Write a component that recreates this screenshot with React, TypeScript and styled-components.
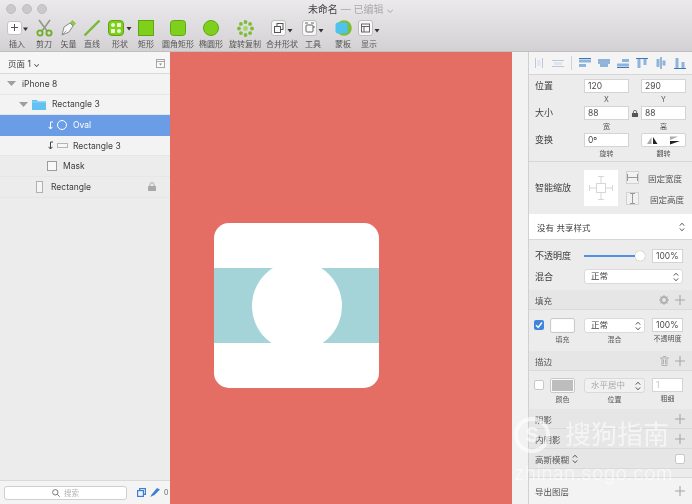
import React from "react";
import styled, {createGlobalStyle} from "styled-components";

const GlobalStyle = createGlobalStyle`
  html, body {
    margin: 0;
    padding: 0;
    background: #ececec;
  }
  body {
    font-family: "Inter", "Noto Sans CJK SC", sans-serif;
    color: #3d3d3d;
  }
`

const Updown = () => (
    <svg width="6" height="10" viewBox="0 0 6 10" fill="none" stroke="#555" strokeWidth="1"><path d="M.8 3.6 3 1.2l2.2 2.4M.8 6.4 3 8.8l2.2-2.4"/></svg>
)

const Plus = () => (
    <svg width="10" height="10" viewBox="0 0 10 10" stroke="#a6a6a6" strokeWidth="1.1"><path d="M5 0v10M0 5h10"/></svg>
)

const greenFill = "#7fd01c"
const greenEdge = "#5ea80f"

const InsertIcon = () => (
    <svg width="21" height="16" viewBox="0 0 21 16">
        <rect x=".5" y="1.5" width="14" height="13" rx="2.5" fill="#fff" stroke="#c4c4c4"/>
        <path d="M7.500 4v7M4 7.500h7" stroke="#555" strokeWidth="1"/>
        <path d="M16 7.500h5L18.500 11z" fill="#333"/>
    </svg>
)
const ScissorsIcon = () => (
    <svg width="17" height="18" viewBox="0 0 17 18" fill="none">
        <path d="M3 1l8 11M14 1L6 12" stroke="#8e9a86" strokeWidth="1.6"/>
        <circle cx="4" cy="14" r="2.6" stroke="#6fae24" strokeWidth="1.8"/>
        <circle cx="13" cy="14" r="2.6" stroke="#6fae24" strokeWidth="1.8"/>
    </svg>
)
const VectorIcon = () => (
    <svg width="17" height="18" viewBox="0 0 17 18" fill="none">
        <path d="M2 16l2-8 6-4 3 3-4 6z" fill="#f7f7f7" stroke="#8b8b8b"/>
        <path d="M2 16l4.400-4.400" stroke="#8b8b8b" strokeWidth=".8"/>
        <path d="M10.500 3.500l2-2 3 3-2 2z" fill="#8ecb4a" stroke="#6fae24" strokeWidth=".6"/>
    </svg>
)
const LineIcon = () => (
    <svg width="18" height="18" viewBox="0 0 18 18"><path d="M1.500 16.500l15-15" stroke="#79b836" strokeWidth="2.4"/></svg>
)
const ShapesIcon = () => (
    <svg width="24" height="16" viewBox="0 0 24 16">
        <rect x=".5" y=".5" width="15" height="15" rx="3.5" fill={greenFill} stroke={greenEdge}/>
        <g fill="#e9f7d6">
            <circle cx="5" cy="5" r="2"/><rect x="9" y="3" width="4" height="4"/>
            <rect x="3" y="9" width="4" height="4"/><circle cx="11" cy="11" r="2"/>
        </g>
        <path d="M18.500 7h5L21 10.500z" fill="#333"/>
    </svg>
)
const RectIcon = () => (
    <svg width="16" height="16" viewBox="0 0 16 16"><rect x=".5" y=".5" width="15" height="15" fill={greenFill} stroke={greenEdge}/></svg>
)
const RoundRectIcon = () => (
    <svg width="16" height="16" viewBox="0 0 16 16"><rect x=".5" y=".5" width="15" height="15" rx="3" fill={greenFill} stroke={greenEdge}/></svg>
)
const OvalIcon = () => (
    <svg width="16" height="16" viewBox="0 0 16 16"><circle cx="8" cy="8" r="7.5" fill={greenFill} stroke={greenEdge}/></svg>
)
const RotateCopyIcon = () => (
    <svg width="17" height="17" viewBox="0 0 17 17">
        <g fill="#7cbd35">
            <circle cx="8.5" cy="2" r="1.9"/><circle cx="13.1" cy="3.9" r="1.9"/><circle cx="15" cy="8.5" r="1.9"/>
            <circle cx="13.1" cy="13.1" r="1.9"/><circle cx="8.5" cy="15" r="1.9"/><circle cx="3.9" cy="13.1" r="1.9"/>
            <circle cx="2" cy="8.5" r="1.9"/><circle cx="3.9" cy="3.9" r="1.9"/>
        </g>
        <circle cx="8.5" cy="8.5" r="2.4" fill="#a5d65f"/>
    </svg>
)
const WhiteBox = ({children}: {children: React.ReactNode}) => (
    <svg width="22" height="16" viewBox="0 0 22 16" fill="none">
        <rect x=".5" y=".5" width="14" height="15" rx="2.5" fill="#f8f8f8" stroke="#bdbdbd"/>
        {children}
        <path d="M16.500 9h5L19 12.500z" fill="#333"/>
    </svg>
)
const MergeIcon = () => (
    <WhiteBox>
        <rect x="6" y="3.5" width="6" height="6" stroke="#555"/>
        <rect x="3.5" y="6.5" width="6" height="6" fill="#f8f8f8" stroke="#555"/>
    </WhiteBox>
)
const ToolsIcon = () => (
    <WhiteBox>
        <rect x="4" y="5" width="7" height="7" rx="1" stroke="#666"/>
        <path d="M3 3h3M9 3h3M12 6v2" stroke="#666"/>
    </WhiteBox>
)
const MaskIcon = () => (
    <svg width="17" height="16" viewBox="0 0 17 16">
        <circle cx="9" cy="8" r="7.8" fill="#79bf3a"/>
        <rect x=".5" y="2.5" width="12" height="11" rx="2.5" fill="#4fc3ee"/>
    </svg>
)
const ViewIcon = () => (
    <WhiteBox>
        <rect x="3.5" y="4" width="8" height="8" stroke="#666"/>
        <path d="M3.500 6.500h8M6 6.500V12" stroke="#666"/>
    </WhiteBox>
)

const Folder = () => (
    <svg width="14" height="11" viewBox="0 0 14 11"><path d="M0 1h5l1 1.4h8V11H0z" fill="#62c3f2"/><rect y="2.4" width="14" height="1" fill="#8ed6f8"/></svg>
)
const TreeArrow = () => (
    <svg width="9" height="5" viewBox="0 0 9 5"><path d="M0 0h9L4.500 5z" fill="#9e9e9e"/></svg>
)
const MaskArrow = ({color}: {color: string}) => (
    <svg width="6" height="9" viewBox="0 0 6 9" fill="none" stroke={color} strokeWidth="1"><path d="M6 1H3.500v7M1.500 5.800 3.500 8l2-2.200"/></svg>
)
const Lock = ({color = "#a9a9a9"}: {color?: string}) => (
    <svg width="8" height="9" viewBox="0 0 8 9"><path d="M2 4V2.600a2 2 0 0 1 4 0V4" fill="none" stroke={color}/><rect y="4" width="8" height="5" rx=".6" fill={color}/></svg>
)

const tools = [
    {label: "插入", width: 28, icon: <InsertIcon/>},
    {label: "剪刀", width: 26, icon: <ScissorsIcon/>},
    {label: "矢量", width: 23, icon: <VectorIcon/>},
    {label: "直线", width: 24, icon: <LineIcon/>},
    {label: "形状", width: 32, icon: <ShapesIcon/>},
    {label: "矩形", width: 20, icon: <RectIcon/>},
    {label: "圆角矩形", width: 44, icon: <RoundRectIcon/>},
    {label: "椭圆形", width: 22, icon: <OvalIcon/>},
    {label: "旋转复制", width: 46, icon: <RotateCopyIcon/>},
    {label: "合并形状", width: 28, icon: <MergeIcon/>},
    {label: "工具", width: 34, icon: <ToolsIcon/>},
    {label: "蒙板", width: 26, icon: <MaskIcon/>},
    {label: "显示", width: 26, icon: <ViewIcon/>},
]

// line = the edge the shapes snap to, block = the shapes themselves
const distribute = [
    {line: "M3.500 2v10M10.500 2v10", block: "M5.500 4h3v6h-3z"},
    {line: "M1 4.500h12M1 10.500h12", block: "M3 6h8v3H3z"},
]
const align = [
    {line: "M1 2.500h12", block: "M1 3.500h12v3H1zM1 8h7v3H1z"},
    {line: "M1 7h12", block: "M1 3h12v3H1zM3 8h8v3H3z"},
    {line: "M1 11.500h12", block: "M6 3h7v3H6zM1 7.500h12v3H1z"},
    {line: "M1 2.500h12", block: "M2.500 3h3v9h-3zM8.500 3h3v6h-3z"},
    {line: "M7 1v12", block: "M2.500 3h3v8h-3zM8.500 4.500h3v5h-3z"},
    {line: "M1 12.500h12", block: "M2.500 2h3v10h-3zM8.500 6h3v6h-3z"},
]

export default function App() {
    return (
        <Page>
            <GlobalStyle/>
            <Toolbar>
                <Lights>
                    <Light/><Light/><Light/>
                </Lights>
                <Title>
                    未命名 <TitleMuted>— 已编辑 ⌄</TitleMuted>
                </Title>
                <Tools>
                    {tools.map(tool => (
                        <Tool key={tool.label} $width={tool.width}>
                            <ToolGlyph>{tool.icon}</ToolGlyph>
                            <ToolLabel>{tool.label}</ToolLabel>
                        </Tool>
                    ))}
                </Tools>
            </Toolbar>
            <Body>
                <Sidebar>
                    <PageHeader>
                        <span>页面 1 ⌄</span>
                        <svg width="9" height="9" viewBox="0 0 9 9"><rect x=".5" y=".5" width="8" height="8" fill="#fafafa" stroke="#a5a5a5"/><path d="M.5 2.500h8" stroke="#a5a5a5"/><path d="M3 4.500h3L4.500 6.500z" fill="#888"/></svg>
                    </PageHeader>
                    <LayerRow $indent={7} $light>
                        <TreeArrow/>
                        <LayerName>iPhone 8</LayerName>
                    </LayerRow>
                    <LayerRow $indent={19} $light>
                        <TreeArrow/>
                        <Folder/>
                        <LayerName>Rectangle 3</LayerName>
                    </LayerRow>
                    <LayerRow $indent={47} $selected>
                        <MaskArrow color="#fff"/>
                        <OvalThumb/>
                        <LayerName>Oval</LayerName>
                    </LayerRow>
                    <LayerRow $indent={47} $light>
                        <MaskArrow color="#444"/>
                        <RectThumb/>
                        <LayerName>Rectangle 3</LayerName>
                    </LayerRow>
                    <LayerRow $indent={47}>
                        <MaskThumb/>
                        <LayerName>Mask</LayerName>
                    </LayerRow>
                    <LayerRow $indent={36}>
                        <PhoneThumb/>
                        <LayerName>Rectangle</LayerName>
                        <RowEnd><Lock/></RowEnd>
                    </LayerRow>
                    <SidebarFooter>
                        <SearchBox>
                            <svg width="8" height="8" viewBox="0 0 8 8" fill="none" stroke="#777"><circle cx="3.300" cy="3.300" r="2.700"/><path d="M5.300 5.300 7.700 7.700"/></svg>
                            <span>搜索</span>
                        </SearchBox>
                        <svg width="9" height="9" viewBox="0 0 9 9" fill="none" stroke="#3e7fd6" strokeWidth="1.2"><rect x=".6" y="2.6" width="5.8" height="5.8"/><path d="M2.600 2.600V.6h5.800v5.800h-2"/></svg>
                        <svg width="10" height="9" viewBox="0 0 10 9"><path d="M0 9l2-3 5-6 3 1.500-5.500 5.500z" fill="#3e7fd6"/></svg>
                        <SliceCount>0</SliceCount>
                    </SidebarFooter>
                </Sidebar>
                <Canvas>
                    <Artboard>
                        <Band>
                            <Circle/>
                        </Band>
                    </Artboard>
                </Canvas>
                <Gutter/>
                <Inspector>
                    <AlignBar>
                        {distribute.map(icon => (
                            <svg key={icon.line} width="14" height="14" viewBox="0 0 14 14"><path d={icon.block} fill="#dfe6ee"/><path d={icon.line} stroke="#bcc8d6"/></svg>
                        ))}
                        <AlignDivider/>
                        {align.map(icon => (
                            <svg key={icon.line + icon.block} width="14" height="14" viewBox="0 0 14 14"><path d={icon.block} fill="#8fb4dc"/><path d={icon.line} stroke="#3f76b8"/></svg>
                        ))}
                    </AlignBar>
                    <Geometry>
                        <GeoRow>
                            <RowLabel>位置</RowLabel>
                            <Field $width={45} $gap={12}><Input>120</Input><Caption>X</Caption></Field>
                            <Field $width={45}><Input>290</Input><Caption>Y</Caption></Field>
                        </GeoRow>
                        <GeoRow>
                            <RowLabel>大小</RowLabel>
                            <Field $width={45} $gap={12}>
                                <Input>88</Input><Caption>宽</Caption>
                                <LockSlot><Lock color="#555"/></LockSlot>
                            </Field>
                            <Field $width={45}><Input>88</Input><Caption>高</Caption></Field>
                        </GeoRow>
                        <GeoRow>
                            <RowLabel>变换</RowLabel>
                            <Field $width={45} $gap={12}><Input>0º</Input><Caption>旋转</Caption></Field>
                            <Field $width={45}>
                                <FlipBox>
                                    <svg width="11" height="9" viewBox="0 0 11 9"><path d="M4.500 1v7H0z" fill="#aaa"/><path d="M6 1v7h4.500z" fill="#222"/></svg>
                                    <svg width="11" height="9" viewBox="0 0 11 9"><path d="M1 .5h8L1 4z" fill="#aaa"/><path d="M1 5h10L1 8.500z" fill="#222"/></svg>
                                </FlipBox>
                                <Caption>翻转</Caption>
                            </Field>
                        </GeoRow>
                    </Geometry>
                    <Smart>
                        <RowLabel>智能缩放</RowLabel>
                        <SmartBox>
                            <svg width="26" height="26" viewBox="0 0 26 26" fill="none" stroke="#d6d6d6">
                                <rect x="8.5" y="8.5" width="9" height="9"/>
                                <path d="M10 1.500h6M13 1.500v7M10 24.500h6M13 24.500v-7M1.500 10v6M1.500 13h7M24.500 10v6M24.500 13h-7"/>
                            </svg>
                        </SmartBox>
                        <PinList>
                            <PinRow $gap={9}>
                                <PinButton>
                                    <svg width="11" height="7" viewBox="0 0 11 7" fill="none" stroke="#999"><path d="M.5 0v7M10.500 0v7M.5 3.500h10"/></svg>
                                </PinButton>
                                固定宽度
                            </PinRow>
                            <PinRow $gap={11}>
                                <PinButton>
                                    <svg width="7" height="11" viewBox="0 0 7 11" fill="none" stroke="#999"><path d="M1 .5h5M1 10.500h5M3.500 .5v10"/></svg>
                                </PinButton>
                                固定高度
                            </PinRow>
                        </PinList>
                    </Smart>
                    <StyleRow>
                        <span>没有 共享样式</span>
                        <Updown/>
                    </StyleRow>
                    <Appearance>
                        <ControlRow>
                            <RowLabel>不透明度</RowLabel>
                            <Slider><Thumb/></Slider>
                            <Input $width={31}>100%</Input>
                        </ControlRow>
                        <ControlRow>
                            <RowLabel>混合</RowLabel>
                            <Select $width={99}>正常<Updown/></Select>
                        </ControlRow>
                    </Appearance>
                    <SectionHeader>
                        填充
                        <HeaderIcons>
                            <svg width="10" height="10" viewBox="0 0 10 10"><circle cx="5" cy="5" r="3" fill="none" stroke="#b0b0b0" strokeWidth="2"/><path d="M5 0v2M5 8v2M0 5h2M8 5h2M1.500 1.500 3 3M7 7l1.500 1.500M8.500 1.500 7 3M3 7 1.500 8.500" stroke="#b0b0b0"/></svg>
                            <Plus/>
                        </HeaderIcons>
                    </SectionHeader>
                    <StyleBlock $height={41} $top={8}>
                        <Checkbox $checked>
                            <svg width="8" height="8" viewBox="0 0 8 8" fill="none" stroke="#fff" strokeWidth="1.4"><path d="M1 4.300 3.200 6.500 7 1.500"/></svg>
                        </Checkbox>
                        <Field $width={25} $gap={9}>
                            <Swatch $fill="#fff"/>
                            <Caption>填充</Caption>
                        </Field>
                        <Field $width={61} $gap={7}>
                            <Select $width={61}>正常<Updown/></Select>
                            <Caption>混合</Caption>
                        </Field>
                        <Field $width={31}>
                            <Input>100%</Input>
                            <Caption>不透明度</Caption>
                        </Field>
                    </StyleBlock>
                    <SectionHeader>
                        描边
                        <HeaderIcons>
                            <svg width="9" height="10" viewBox="0 0 9 10" fill="none" stroke="#b0b0b0"><path d="M0 2h9M2 2v7.500h5V2M3 .5h3M3.500 3.500v4.500M5.500 3.500v4.500"/></svg>
                            <Plus/>
                        </HeaderIcons>
                    </SectionHeader>
                    <StyleBlock $height={38} $top={7}>
                        <Checkbox/>
                        <Field $width={25} $gap={9}>
                            <Swatch $fill="#bdbdbd"/>
                            <Caption>颜色</Caption>
                        </Field>
                        <Field $width={61} $gap={7}>
                            <Select $width={61} $disabled>水平居中<Updown/></Select>
                            <Caption>位置</Caption>
                        </Field>
                        <Field $width={31}>
                            <Input $disabled>1</Input>
                            <Caption>粗细</Caption>
                        </Field>
                    </StyleBlock>
                    <SectionHeader>阴影<HeaderIcons><Plus/></HeaderIcons></SectionHeader>
                    <SectionHeader>内阴影<HeaderIcons><Plus/></HeaderIcons></SectionHeader>
                    <SectionHeader>
                        <BlurLabel>高斯模糊 <Updown/></BlurLabel>
                        <HeaderIcons><Checkbox/></HeaderIcons>
                    </SectionHeader>
                    <ExportRow>导出图层<HeaderIcons><Plus/></HeaderIcons></ExportRow>
                </Inspector>
            </Body>
            <Watermark>
                <WatermarkTop>
                    <WatermarkLogo>S</WatermarkLogo>
                    <span>搜狗指南</span>
                </WatermarkTop>
                <WatermarkUrl>zhinan.sogo.com</WatermarkUrl>
            </Watermark>
        </Page>
    )
}

const Page = styled.div`
  position: relative;
  width: 692px;
  height: 504px;
  overflow: hidden;
  display: flex;
  flex-direction: column;
  filter: blur(0.35px);
`
const Toolbar = styled.div`
  height: 52px;
  flex: none;
  box-sizing: border-box;
  padding-top: 3px;
  position: relative;
  background: linear-gradient(#ebe9eb, #d3d1d3);
  border-bottom: 1px solid #c0bec0;
`
const Lights = styled.div`
  position: absolute;
  left: 6px;
  top: 4px;
  display: flex;
  gap: 5.5px;
`
const Light = styled.div`
  width: 10px;
  height: 10px;
  border-radius: 50%;
  background: #cbc9cb;
  border: 1px solid #bfbdbf;
  box-sizing: border-box;
`
const Title = styled.div`
  height: 13px;
  padding-left: 10px;
  font-size: 10px;
  line-height: 13px;
  color: #444;
  text-align: center;
`
const TitleMuted = styled.span`
  color: #a9a9ab;
`
const Tools = styled.div`
  display: flex;
  padding-left: 3px;
  margin-top: 3px;
`
const Tool = styled.div<{$width: number}>`
  width: ${p => p.$width}px;
  display: flex;
  flex-direction: column;
  align-items: center;
`
const ToolGlyph = styled.div`
  height: 18px;
  display: flex;
  align-items: center;
  justify-content: center;
`
const ToolLabel = styled.div`
  margin-top: 2px;
  font-size: 8px;
  line-height: 10px;
  color: #555;
  white-space: nowrap;
`
const Body = styled.div`
  flex: 1;
  display: flex;
  min-height: 0;
`
const Sidebar = styled.div`
  width: 170px;
  flex: none;
  display: flex;
  flex-direction: column;
  background: #ececec;
`
const PageHeader = styled.div`
  height: 20px;
  display: flex;
  align-items: center;
  justify-content: space-between;
  padding: 1px 5px 0 8px;
  box-sizing: content-box;
  font-size: 8.5px;
  background: #f6f6f6;
  border-bottom: 1px solid #d9d9d9;
`
const LayerRow = styled.div<{$indent: number, $selected?: boolean, $light?: boolean}>`
  height: 20.6px;
  display: flex;
  align-items: center;
  gap: 4px;
  padding-left: ${p => p.$indent}px;
  padding-right: 14px;
  font-size: 8.5px;
  color: ${p => p.$selected ? "#fff" : "#3d3d3d"};
  background: ${p => p.$selected ? "#6b9de6" : p.$light ? "#f3f3f3" : "#ececec"};
  border-bottom: ${p => p.$selected ? "0" : "1px solid #e6e6e6"};
  box-sizing: border-box;
`
const LayerName = styled.span`
  margin-left: 2px;
`
const RowEnd = styled.div`
  margin-left: auto;
  display: flex;
`
const OvalThumb = styled.div`
  width: 10px;
  height: 10px;
  box-sizing: border-box;
  border: 1px solid #fff;
  border-radius: 50%;
`
const RectThumb = styled.div`
  width: 11px;
  height: 5px;
  box-sizing: border-box;
  border: 1px solid #b5b5b5;
  background: #f6f6f6;
  margin-right: -1px;
`
const MaskThumb = styled.div`
  width: 10px;
  height: 10px;
  box-sizing: border-box;
  border: 1px solid #9d9d9d;
  background: #f8f8f8;
`
const PhoneThumb = styled.div`
  width: 7px;
  height: 12px;
  box-sizing: border-box;
  border: 1px solid #b0b0b0;
  background: #f5f5f5;
  margin-right: 2px;
`
const SidebarFooter = styled.div`
  margin-top: auto;
  height: 23px;
  display: flex;
  align-items: center;
  gap: 4px;
  padding-left: 4px;
  background: #f4f4f4;
  border-top: 1px solid #d9d9d9;
`
const SearchBox = styled.div`
  width: 123px;
  height: 14px;
  box-sizing: border-box;
  margin-right: 6px;
  display: flex;
  align-items: center;
  justify-content: center;
  gap: 4px;
  font-size: 7.5px;
  color: #b5b5b5;
  background: #fff;
  border: 1px solid #cfcfcf;
  border-radius: 3px;
`
const SliceCount = styled.span`
  font-size: 7px;
  color: #666;
`
const Canvas = styled.div`
  width: 342px;
  flex: none;
  box-sizing: border-box;
  padding: 171px 0 0 44px;
  background: #e56e64;
`
const Artboard = styled.div`
  width: 165px;
  height: 165px;
  display: flex;
  align-items: center;
  border-radius: 15px;
  background: #fff;
  overflow: hidden;
`
const Band = styled.div`
  width: 100%;
  height: 75px;
  display: flex;
  align-items: center;
  justify-content: center;
  overflow: hidden;
  background: #a5d4d8;
`
const Circle = styled.div`
  width: 90px;
  height: 90px;
  flex: none;
  border-radius: 50%;
  background: #fff;
`
const Gutter = styled.div`
  width: 17px;
  flex: none;
  background: #f2f2f2;
  border-right: 1px solid #d0d0d0;
  box-sizing: border-box;
`
const Inspector = styled.div`
  flex: 1;
  display: flex;
  flex-direction: column;
  background: #ececec;
  font-size: 8.5px;
`
const AlignBar = styled.div`
  height: 23px;
  flex: none;
  box-sizing: border-box;
  display: flex;
  align-items: center;
  gap: 5px;
  padding-left: 3px;
  background: #f4f4f4;
  border-bottom: 1px solid #d6d6d6;
`
const AlignDivider = styled.div`
  width: 1px;
  height: 14px;
  margin: 0 1px;
  background: #d2d2d2;
`
const Geometry = styled.div`
  height: 87px;
  flex: none;
  box-sizing: border-box;
  padding-top: 4px;
  border-bottom: 1px solid #d6d6d6;
`
const GeoRow = styled.div`
  height: 27px;
  display: flex;
  padding-left: 6px;
`
const RowLabel = styled.div`
  width: 49px;
  flex: none;
  font-size: 9px;
  line-height: 14px;
  color: #3d3d3d;
`
const Field = styled.div<{$width: number, $gap?: number}>`
  position: relative;
  width: ${p => p.$width}px;
  margin-right: ${p => p.$gap ?? 0}px;
  flex: none;
  display: flex;
  flex-direction: column;
  align-items: stretch;
`
const Input = styled.div<{$width?: number, $disabled?: boolean}>`
  height: 14px;
  width: ${p => p.$width ? p.$width + "px" : "auto"};
  box-sizing: border-box;
  padding-left: 3px;
  font-size: 8.5px;
  line-height: 13px;
  color: ${p => p.$disabled ? "#c4c4c4" : "#4a4a4a"};
  background: #fff;
  border: 1px solid #d4d4d4;
`
const Caption = styled.div`
  margin-top: 2px;
  font-size: 7px;
  line-height: 10px;
  text-align: center;
  color: #555;
  white-space: nowrap;
`
const LockSlot = styled.div`
  position: absolute;
  left: 47px;
  top: 3px;
  transform: scale(0.8);
  display: flex;
`
const FlipBox = styled.div`
  height: 14px;
  box-sizing: border-box;
  display: flex;
  align-items: center;
  justify-content: space-around;
  background: #fff;
  border: 1px solid #d4d4d4;
  border-radius: 2px;
`
const Smart = styled.div`
  height: 52px;
  flex: none;
  box-sizing: border-box;
  display: flex;
  align-items: center;
  padding-left: 6px;
`
const SmartBox = styled.div`
  width: 34px;
  height: 36px;
  flex: none;
  display: flex;
  align-items: center;
  justify-content: center;
  background: #fff;
`
const PinList = styled.div`
  margin-left: 8px;
  display: flex;
  flex-direction: column;
  gap: 8px;
`
const PinRow = styled.div<{$gap: number}>`
  display: flex;
  align-items: center;
  font-size: 8.5px;
  color: #555;
  white-space: nowrap;
  gap: ${p => p.$gap}px;
`
const PinButton = styled.div`
  width: 13px;
  height: 13px;
  box-sizing: border-box;
  display: flex;
  align-items: center;
  justify-content: center;
  background: #f1f1f1;
  border: 1px solid #d2d2d2;
`
const StyleRow = styled.div`
  height: 26px;
  flex: none;
  box-sizing: border-box;
  display: flex;
  align-items: center;
  justify-content: space-between;
  padding: 0 7px 0 8px;
  font-size: 8.5px;
  background: #fff;
  border-bottom: 1px solid #d6d6d6;
`
const Appearance = styled.div`
  height: 50px;
  flex: none;
  box-sizing: border-box;
  padding-top: 8px;
  display: flex;
  flex-direction: column;
  gap: 6px;
`
const ControlRow = styled.div`
  display: flex;
  align-items: center;
  height: 15px;
  padding-left: 6px;
`
const Slider = styled.div`
  position: relative;
  width: 56px;
  height: 2px;
  margin-right: 12px;
  background: #4d92e6;
`
const Thumb = styled.div`
  position: absolute;
  right: -5px;
  top: -4px;
  width: 10px;
  height: 10px;
  border-radius: 50%;
  background: #fff;
  box-shadow: 0 0 1px #888;
`
const Select = styled.div<{$width: number, $disabled?: boolean}>`
  width: ${p => p.$width}px;
  height: 15px;
  box-sizing: border-box;
  display: flex;
  align-items: center;
  justify-content: space-between;
  padding: 0 3px 0 6px;
  font-size: 8.5px;
  line-height: 1;
  color: ${p => p.$disabled ? "#a8a8a8" : "#444"};
  background: ${p => p.$disabled ? "#f1f1f1" : "#fff"};
  border: 1px solid #dadada;
  border-radius: 3px;
`
const SectionHeader = styled.div`
  height: 20px;
  flex: none;
  box-sizing: border-box;
  display: flex;
  align-items: center;
  justify-content: space-between;
  padding: 0 7px 0 6px;
  font-size: 8.5px;
  color: #555;
  background: #e6e6e6;
  border-bottom: 1px solid #dadada;
`
const HeaderIcons = styled.div`
  display: flex;
  align-items: center;
  gap: 6px;
`
const BlurLabel = styled.div`
  display: flex;
  align-items: center;
  gap: 3px;
`
const StyleBlock = styled.div<{$height: number, $top: number}>`
  height: ${p => p.$height}px;
  flex: none;
  box-sizing: border-box;
  display: flex;
  align-items: flex-start;
  padding: ${p => p.$top}px 0 0 5px;
`
const Checkbox = styled.div<{$checked?: boolean}>`
  width: 10px;
  height: 10px;
  flex: none;
  box-sizing: border-box;
  margin: 2px 6px 0 0;
  display: flex;
  align-items: center;
  justify-content: center;
  border-radius: 2px;
  background: ${p => p.$checked ? "#3f85e0" : "#fff"};
  border: ${p => p.$checked ? "0" : "1px solid #c8c8c8"};
  ${HeaderIcons} & {
    margin: 0;
  }
`
const Swatch = styled.div<{$fill: string}>`
  height: 15px;
  box-sizing: border-box;
  background: ${p => p.$fill};
  border: 2px solid #fafafa;
  outline: 1px solid #c9c9c9;
  outline-offset: -1px;
  border-radius: 2px;
`
const ExportRow = styled.div`
  flex: 1;
  margin-top: 8px;
  display: flex;
  align-items: center;
  justify-content: space-between;
  padding: 0 7px 0 6px;
  font-size: 8.5px;
  color: #555;
  background: #f3f3f3;
  border-top: 1px solid #d9d9d9;
`
const Watermark = styled.div`
  position: absolute;
  left: 514px;
  top: 415px;
  color: rgba(255, 255, 255, 0.6);
  pointer-events: none;
`
const WatermarkTop = styled.div`
  display: flex;
  align-items: center;
  gap: 15px;
  font-size: 26px;
  line-height: 40px;
`
const WatermarkLogo = styled.div`
  width: 36px;
  height: 36px;
  box-sizing: border-box;
  border: 4px solid rgba(255, 255, 255, 0.6);
  border-radius: 50%;
  display: flex;
  align-items: center;
  justify-content: center;
  font-size: 20px;
  font-weight: 700;
`
const WatermarkUrl = styled.div`
  margin-top: 6px;
  font-size: 19px;
  font-weight: 300;
  letter-spacing: 0.5px;
  line-height: 26px;
  white-space: nowrap;
`
